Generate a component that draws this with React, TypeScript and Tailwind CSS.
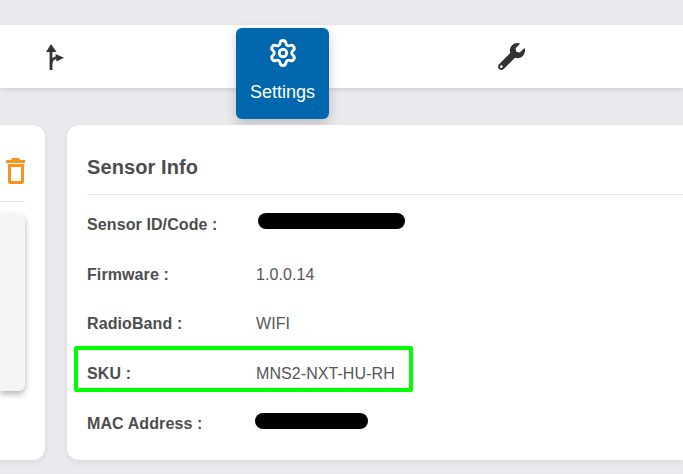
import { Settings } from "lucide-react";
import { FaWrench } from "react-icons/fa";

const font = { fontFamily: '"Liberation Sans", Arial, sans-serif' };

function Row({ label, value, redact }: { label: string; value?: string; redact?: string }) {
  return (
    <div className="flex items-center h-[49.75px]">
      <div className="w-[169px] shrink-0 text-[16px] font-bold tracking-[0.1px] text-[#4d4d4f]">{label}</div>
      {value && <div className="text-[16px] tracking-[0.07px] text-[#55565a]">{value}</div>}
      {redact && <div className={redact} />}
    </div>
  );
}

export default function App() {
  return (
    <div className="w-[683px] h-[474px] overflow-hidden bg-[#e9e9ee] pt-[25px]" style={font}>
      {/* top nav */}
      <div className="flex items-start h-[63px] bg-white shadow-[0_2px_4px_rgba(0,0,0,0.1)]">
        <div className="w-[236px] pl-[45px] pt-[18px]">
          <svg width="20" height="28" viewBox="0 0 20 28" fill="#333">
            <path d="M6 1 L11.5 9 H1 Z" />
            <rect x="4.6" y="8" width="2.8" height="19" />
            <path d="M6 21 Q6.5 15.5 11.5 14.5" fill="none" stroke="#333" strokeWidth="2.4" />
            <path d="M10.5 11 L19 14.8 L11.5 18.5 Z" />
          </svg>
        </div>
        <div className="w-[93px] h-[91px] mt-[3px] rounded-[6px] bg-[#0067ac] shadow-[0_4px_12px_rgba(0,0,0,0.2)] flex flex-col items-center pt-[10px] text-white">
          <Settings size={30} strokeWidth={2.3} />
          <div className="mt-[12px] text-[18px] leading-[24px]">Settings</div>
        </div>
        <div className="pl-[169px] pt-[18px] text-[#333]">
          <FaWrench size={27} />
        </div>
      </div>

      <div className="flex gap-[22px] mt-[37px]">
        {/* left card, cut off by the window */}
        <div className="w-[45px] h-[335px] bg-white rounded-r-[12px] shadow-[0_2px_6px_rgba(0,0,0,0.08)] pt-[33px]">
          <div className="w-[31px] h-[26px] flex flex-col items-center">
            <div className="w-[9px] h-[2px] bg-[#f7931e] rounded-t-sm" />
            <div className="w-[19px] h-[3px] bg-[#f7931e]" />
            <div className="w-[16px] h-[20px] mt-[1px] border-[3px] border-[#f7931e] rounded-b-[2px]" />
          </div>
          <div className="w-[25px] h-px mt-[17px] bg-[#e2e2e2]" />
          <div className="w-[25px] h-[177px] mt-[12px] bg-[#f5f5f5] rounded-r-[6px] shadow-[0_3px_6px_rgba(0,0,0,0.3)]" />
        </div>

        <div className="relative flex-1 h-[335px] bg-white rounded-l-[12px] shadow-[0_2px_6px_rgba(0,0,0,0.08)] pl-[20px] pt-[27px]">
          <div className="text-[20px] font-bold tracking-[0.1px] leading-[30px] text-[#4d4d4f]">Sensor Info</div>
          <div className="h-px mt-[12px] bg-[#e2e2e2]" />
          <div className="mt-[5px]">
            <Row label="Sensor ID/Code :" redact="w-[147px] h-[16px] ml-[2px] mb-[8px] rounded-[8px] bg-black" />
            <Row label="Firmware :" value="1.0.0.14" />
            <Row label="RadioBand :" value="WIFI" />
            <Row label="SKU :" value="MNS2-NXT-HU-RH" />
            <Row label="MAC Address :" redact="w-[113px] h-[16px] -ml-px mb-[5px] rounded-[8px] bg-black" />
          </div>
          {/* highlight drawn over the SKU row */}
          <div className="absolute left-[7px] top-[221px] w-[339px] h-[46px] border-[4px] border-[#00ff00] rounded-[2px]" />
        </div>
      </div>
    </div>
  );
}
